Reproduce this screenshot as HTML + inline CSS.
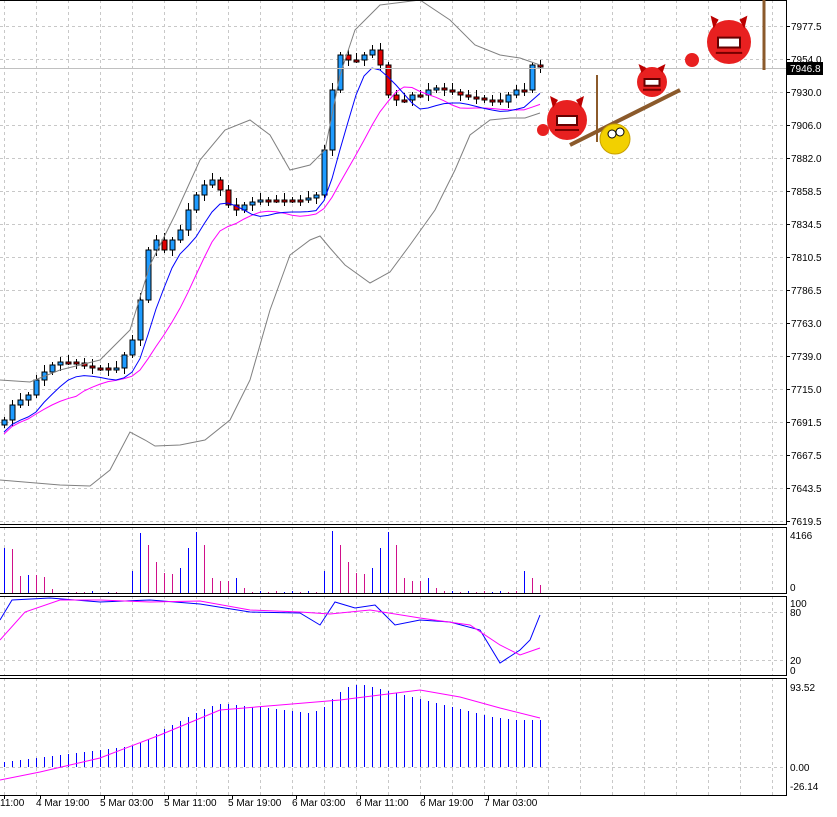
<!DOCTYPE html>
<html><head><meta charset="utf-8"><style>
body{margin:0;background:#fff;width:837px;height:812px;overflow:hidden;font-family:"Liberation Sans",sans-serif}
svg text{font-family:"Liberation Sans",sans-serif;font-size:10px;fill:#000}
</style></head><body>
<svg id="s" width="837" height="812" xmlns="http://www.w3.org/2000/svg"></svg>
<script>
const S=document.getElementById('s');let h='';
const dash='stroke="#c8c8c8" stroke-dasharray="3,3" stroke-width="1"';
const P=[[0,524],[527,593],[596,675],[678,795]];
for(let x=4;x<786;x+=32){P.forEach(p=>h+=`<line x1="${x+.5}" y1="${p[0]}" x2="${x+.5}" y2="${p[1]}" ${dash}/>`);}
const lab=['7977.5','7954.0','7930.0','7906.0','7882.0','7858.5','7834.5','7810.5','7786.5','7763.0','7739.0','7715.0','7691.5','7667.5','7643.5','7619.5'];
lab.forEach((l,i)=>{let y=Math.round(26+i*33.0);h+=`<line x1="0" y1="${y+.5}" x2="786" y2="${y+.5}" ${dash}/><line x1="786" y1="${y+.5}" x2="790" y2="${y+.5}" stroke="#000"/><text x="791" y="${y+4}">${l}</text>`;});
[[603,'100'],[612,'80'],[660,'20'],[670,'0']].forEach(a=>h+=`<text x="790" y="${a[0]+4}">${a[1]}</text>`);
[612,660].forEach(y=>h+=`<line x1="0" y1="${y+.5}" x2="786" y2="${y+.5}" ${dash}/>`);
h+=`<line x1="0" y1="767.5" x2="786" y2="767.5" ${dash}/>`;
[[535,'4166'],[587,'0'],[687,'93.52'],[767,'0.00'],[786,'-26.14']].forEach(a=>h+=`<text x="790" y="${a[0]+4}">${a[1]}</text>`);
const C=[420,405,400,395,380,372,365,362,362,363,366,368,368,370,368,355,340,300,250,240,250,240,230,210,195,185,180,190,205,210,205,202,200,200,200,200,200,200,198,195,150,90,55,60,60,55,50,65,95,100,100,95,95,90,88,90,92,95,97,98,100,100,102,95,90,90,65,67];
const V=[[45,1],[44,0],[17,0],[18,1],[18,0],[16,0],[4,0],[0,0],[1,1],[1,0],[1,0],[2,1],[0,0],[1,1],[1,0],[0,0],[22,1],[60,1],[48,0],[31,0],[20,0],[19,0],[25,1],[45,1],[61,1],[48,0],[15,0],[12,0],[12,0],[15,1],[5,0],[1,0],[2,1],[1,0],[2,0],[1,1],[2,1],[1,0],[2,1],[1,0],[22,1],[62,1],[48,0],[31,0],[20,0],[19,0],[25,1],[45,1],[61,1],[48,0],[15,0],[12,0],[12,0],[15,1],[5,0],[2,0],[2,1],[1,0],[2,1],[1,0],[2,0],[1,1],[2,1],[1,0],[2,0],[22,1],[15,0],[8,0]];
let mb='',mp='';
for(let i=0;i<C.length;i++){
 let x=4+i*8, o=i?C[i-1]:425, c=C[i];
 let t=Math.min(o,c)-3-(i%3)*2, b=Math.max(o,c)+3+(i%2)*3;
 let bull=c<o, top=Math.min(o,c), hh=Math.max(2,Math.abs(c-o));
 h+=`<line x1="${x+.5}" y1="${t}" x2="${x+.5}" y2="${b}" stroke="#000"/>`;
 h+=`<rect x="${x-2}" y="${top}" width="5" height="${hh}" fill="${bull?'#1e9bff':'#e00000'}" stroke="#000" stroke-width="1"/>`;
 let s=0,n=0;for(let k=Math.max(0,i-4);k<=i;k++){s+=C[k];n++} mb+=`${x},${s/n+12} `;
 s=0;n=0;for(let k=Math.max(0,i-9);k<=i;k++){s+=C[k];n++} mp+=`${x},${s/n+14} `;
 let v=V[i]||[0,0];
 h+=`<line x1="${x+.5}" y1="593" x2="${x+.5}" y2="${593-v[0]}" stroke="${v[1]?'#0000ff':'#d0108a'}"/>`;
 let md=[5,6,7,8,9,10,11,12,13,14,15,16,17,18,19,20,21,24,28,33,38,42,46,50,54,58,61,63,63,62,61,60,60,59,58,57,56,55,54,56,60,68,75,80,82,82,80,78,76,74,72,70,68,66,64,62,60,58,56,54,52,50,49,48,47,47,47,47][i];
 h+=`<line x1="${x+.5}" y1="767" x2="${x+.5}" y2="${767-md}" stroke="#0000ff"/>`;
}
h+=`<polyline points="0,380 30,382 60,370 100,360 130,330 150,265 175,215 200,160 225,130 250,120 270,135 290,170 310,165 325,150 340,75 355,30 380,5 420,0 450,20 475,45 500,55 520,58 540,65" fill="none" stroke="#808080"/>`;
h+=`<polyline points="0,480 60,485 90,486 110,470 130,432 145,440 155,446 180,445 205,440 230,420 250,380 270,310 290,255 310,240 320,236 330,248 345,265 370,283 390,272 410,245 435,210 455,170 470,135 490,120 510,118 525,118 540,113" fill="none" stroke="#808080"/>`;
h+=`<polyline points="${mp}" fill="none" stroke="#ff00ff"/><polyline points="${mb}" fill="none" stroke="#0000ff"/>`;
h+=`<polyline points="0,780 40,772 100,758 160,735 220,710 280,705 340,700 380,695 420,690 460,697 500,708 540,718" fill="none" stroke="#ff00ff"/>`;
h+=`<polyline points="0,620 12,600 50,598 100,602 150,600 200,604 250,612 300,613 320,625 335,602 355,608 375,605 395,625 420,620 450,622 480,630 500,663 520,650 530,640 540,615" fill="none" stroke="#0000ff"/>`;
h+=`<polyline points="0,640 25,612 60,600 100,600 150,602 200,601 250,610 300,612 330,614 370,610 420,618 470,625 500,645 520,655 540,648" fill="none" stroke="#ff00ff"/>`;
h+=`<line x1="0" y1="68.5" x2="786" y2="68.5" stroke="#c0c0c0"/><rect x="787" y="62" width="36" height="13" fill="#000"/><text x="790" y="72" style="fill:#fff">7946.8</text>`;
P.forEach(p=>h+=`<rect x="-1" y="${p[0]+.5}" width="787.5" height="${p[1]-p[0]}" fill="none" stroke="#000"/>`);
function dev(cx,cy,r){return `<circle cx="${cx}" cy="${cy}" r="${r}" fill="#e82020"/><path d="M${cx-r*.7},${cy-r*.6}l-3,-${r*.6}l8,4zM${cx+r*.7},${cy-r*.6}l3,-${r*.6}l-8,4z" fill="#b00"/><rect x="${cx-r*.5}" y="${cy-r*.2}" width="${r}" height="${r*.45}" fill="#fff" stroke="#600" stroke-width="2"/><rect x="${cx-r*.6}" y="${cy+r*.45}" width="${r*1.2}" height="2" fill="#700"/>`;}
h+=`<line x1="570" y1="145" x2="680" y2="90" stroke="#8b5a2b" stroke-width="4"/>`;
h+=`<line x1="597" y1="75" x2="597" y2="142" stroke="#8b5a2b" stroke-width="2"/><line x1="764" y1="0" x2="764" y2="70" stroke="#8b5a2b" stroke-width="3"/>`;
h+=dev(567,120,20)+dev(652,82,15)+dev(729,42,22);
h+=`<circle cx="615" cy="139" r="15" fill="#f2d000" stroke="#c8a000"/><circle cx="612" cy="134" r="4" fill="#fff" stroke="#000"/><circle cx="620" cy="132" r="4" fill="#fff" stroke="#000"/>`;
h+=`<circle cx="543" cy="130" r="6" fill="#e82020"/><circle cx="692" cy="60" r="7" fill="#e82020"/>`;
[['11:00',0],['4 Mar 19:00',36],['5 Mar 03:00',100],['5 Mar 11:00',164],['5 Mar 19:00',228],['6 Mar 03:00',292],['6 Mar 11:00',356],['6 Mar 19:00',420],['7 Mar 03:00',484]].forEach(a=>{h+=`<line x1="${a[1]+4.5}" y1="795" x2="${a[1]+4.5}" y2="799" stroke="#000"/><text x="${a[1]}" y="806">${a[0]}</text>`;});
S.innerHTML=h;
</script>
</body></html>
